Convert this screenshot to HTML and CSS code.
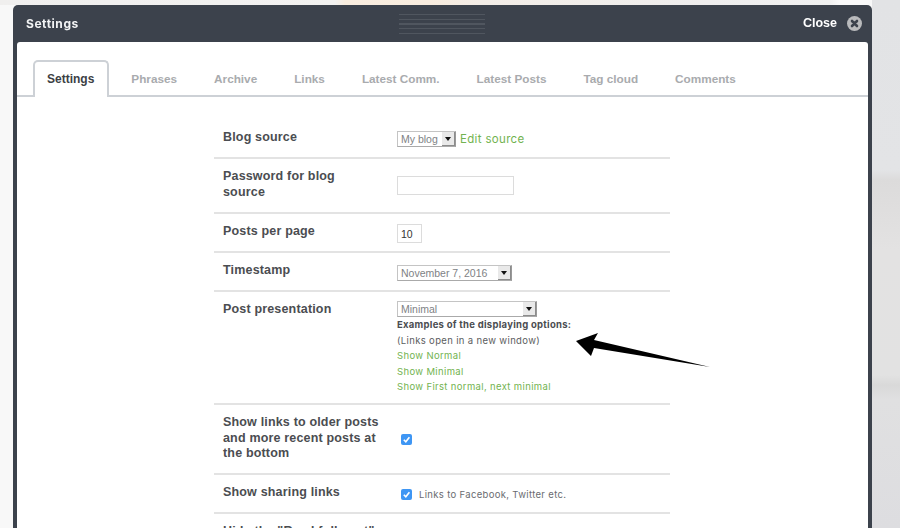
FILE: index.html
```html
<!DOCTYPE html>
<html lang="en">
<head>
<meta charset="utf-8">
<title>Settings</title>
<link rel="stylesheet" href="styles.css">
</head>
<body>
<div class="backdrop">
  <div class="modal">
    <header class="modal-head">
      <span class="modal-title">Settings</span>
      <span class="grip"></span>
      <span class="close">Close
        <svg class="close-icon" width="15" height="15" viewBox="0 0 15 15"><circle cx="7.5" cy="7.5" r="7.5" fill="#b9babc"/><path d="M5 5l5 5M10 5l-5 5" stroke="#3c424c" stroke-width="2.6" stroke-linecap="round"/></svg>
      </span>
    </header>
    <div class="modal-body">
      <nav class="tabs">
        <a class="tab active">Settings</a>
        <a class="tab">Phrases</a>
        <a class="tab">Archive</a>
        <a class="tab">Links</a>
        <a class="tab">Latest Comm.</a>
        <a class="tab">Latest Posts</a>
        <a class="tab">Tag cloud</a>
        <a class="tab">Comments</a>
      </nav>
      <div class="form">
        <div class="row r1">
          <div class="label">Blog source</div>
          <div class="value inline">
            <span class="select w59"><span class="sel-text">My blog</span><span class="sel-btn"></span></span>
            <a class="link big">Edit source</a>
          </div>
        </div>
        <div class="row r2">
          <div class="label">Password for blog source</div>
          <div class="value"><span class="input w117"></span></div>
        </div>
        <div class="row r3">
          <div class="label">Posts per page</div>
          <div class="value"><span class="input w25">10</span></div>
        </div>
        <div class="row r4">
          <div class="label">Timestamp</div>
          <div class="value"><span class="select w115"><span class="sel-text">November 7, 2016</span><span class="sel-btn"></span></span></div>
        </div>
        <div class="row r5">
          <div class="label">Post presentation</div>
          <div class="value">
            <span class="select w140"><span class="sel-text">Minimal</span><span class="sel-btn"></span></span>
            <div class="examples">
              <div class="ex-line ex-head">Examples of the displaying options:</div>
              <div class="ex-line ex-note">(Links open in a new window)</div>
              <div class="ex-line"><a class="link">Show Normal</a></div>
              <div class="ex-line"><a class="link">Show Minimal</a></div>
              <div class="ex-line"><a class="link">Show First normal, next minimal</a></div>
            </div>
          </div>
        </div>
        <div class="row r6">
          <div class="label">Show links to older posts and more recent posts at the bottom</div>
          <div class="value center"><span class="check"><svg width="11" height="11" viewBox="0 0 11 11"><path d="M2.8 5.8l2 2 3.6-4.6" fill="none" stroke="#fff" stroke-width="1.6"/></svg></span></div>
        </div>
        <div class="row r7">
          <div class="label">Show sharing links</div>
          <div class="value share"><span class="check"><svg width="11" height="11" viewBox="0 0 11 11"><path d="M2.8 5.8l2 2 3.6-4.6" fill="none" stroke="#fff" stroke-width="1.6"/></svg></span><span class="note">Links to Facebook, Twitter etc.</span></div>
        </div>
        <div class="row r8">
          <div class="label">Hide the "Read full post"</div>
        </div>
      </div>
    </div>
  </div>
  <svg class="arrow" width="140" height="40" viewBox="0 0 140 40"><polygon points="1,10 23,2 19,9 135,36 19,17 16,25" fill="#000"/></svg>
</div>
</body>
</html>
```

FILE: styles.css
```css
* { box-sizing: border-box; }
html, body { margin: 0; height: 100%; overflow: hidden; background: #f8f8f8; }
.backdrop {
  position: relative;
  width: 900px;
  height: 528px;
  overflow: hidden;
  padding: 5px 28px 0 13px;
  background:
    linear-gradient(90deg, #f0efee 0, #f3f2f1 335px, #f9eddf 345px, #f8ecdf 430px, #f3ede7 480px, #efeeee 710px, #f1f1f1 830px, #fafafa 840px, #fafafa 868px, transparent 870px) top left / 100% 5px no-repeat,
    linear-gradient(180deg, #e2e3e5 0, #e3e4e6 170px, #dcdbdb 180px, #e3e2e2 250px, #e2e2e2 375px, #d9d9d9 385px, #e0e0e1 400px, #dddde0 528px) right top / 28px 100% no-repeat,
    #f8f8f8;
}
.modal {
  background: #3c424c;
  border-radius: 5px 5px 0 0;
  height: 560px;
  padding: 0 4px;
  font-family: "Liberation Sans", Arial, sans-serif;
  filter: blur(0.4px);
}
.modal-head {
  height: 37px;
  display: flex;
  align-items: center;
  justify-content: space-between;
  padding: 0 6px 1px 9px;
  color: #fff;
  position: relative;
}
.modal-title {
  font-family: Inter, "Liberation Sans", sans-serif;
  font-size: 12px;
  font-weight: 700;
  letter-spacing: 0.55px;
  color: #f2f3f4;
}
.grip {
  position: absolute;
  left: 382px;
  top: 9px;
  width: 86px;
  height: 20px;
  background: repeating-linear-gradient(180deg, #50565f 0, #50565f 1px, transparent 1px, transparent 4.75px);
}
.close {
  display: flex;
  align-items: center;
  gap: 10px;
  font-size: 12.5px;
  font-weight: 700;
}
.close-icon { display: block; }
.modal-body {
  background: #fff;
  border-radius: 3px 3px 0 0;
  height: 520px;
  padding-top: 18px;
}
.tabs {
  display: flex;
  height: 37px;
  padding-left: 16px;
  border-bottom: 2px solid #cdd1d6;
  font-size: 11.75px;
  font-weight: 700;
}
.tab {
  display: block;
  height: 37px;
  padding: 12px 18.5px 0;
  color: #a9abae;
  white-space: nowrap;
}
.tab.active {
  color: #3c3f44;
  background: #fff;
  border: 2px solid #cdd1d6;
  border-bottom: 0;
  border-radius: 5px 5px 0 0;
  font-size: 12px;
  padding: 10px 13px 0 12px;
  margin-right: 3.5px;
}
.form {
  width: 456px;
  margin: 0 0 0 197px;
  padding-top: 23px;
  color: #4a4c50;
}
.row {
  display: grid;
  grid-template-columns: 183px 1fr;
  border-bottom: 2px solid #e3e3e3;
}
.label {
  padding: 10px 0 0 9px;
  font-size: 12.5px;
  line-height: 15.6px;
  font-weight: 700;
  letter-spacing: 0.17px;
  color: #4b4d51;
}
.r1 { height: 39px; }
.r2 { height: 55px; }
.r2 .label { padding-right: 20px; }
.r3, .r4, .r7 { height: 39px; }
.r5 { height: 113px; }
.r6 { height: 70px; }
.r8 { border-bottom: 0; height: 30px; }
.r1 .value { padding-top: 11px; }
.r2 .value { padding-top: 17px; }
.r3 .value { padding-top: 10px; }
.r4 .value { padding-top: 12px; }
.r5 .value { padding-top: 9px; }
.inline { display: flex; align-items: flex-start; gap: 4px; }
.select {
  display: flex;
  align-items: center;
  height: 16px;
  border: 1px solid #c4c4c4;
  border-bottom-color: #aaa;
  border-right-color: #999;
  background: #fff;
  font-size: 10.5px;
  color: #808285;
  padding-left: 3px;
}
.w59 { width: 59px; }
.w115 { width: 115px; }
.w140 { width: 140px; }
.sel-text { flex: 1; white-space: nowrap; }
.sel-btn {
  width: 13px;
  height: 14px;
  background: #e9e9e9;
  border-right: 1px solid #8c8c8c;
  border-bottom: 1px solid #8c8c8c;
  position: relative;
}
.sel-btn::after {
  content: "";
  position: absolute;
  left: 3px;
  top: 5px;
  border-left: 3px solid transparent;
  border-right: 3px solid transparent;
  border-top: 4px solid #111;
}
.link { color: #72b350; font-family: Inter, "Liberation Sans", sans-serif; }
.big { font-size: 11.5px; letter-spacing: 0.33px; line-height: 16px; }
.input {
  display: block;
  border: 1px solid #dcdcdc;
  background: #fff;
  font-size: 10.5px;
  color: #333;
  padding: 3px 3px 0;
}
.w117 { width: 117px; height: 19px; }
.w25 { width: 25px; height: 19px; }
.examples { font-family: Inter, "Liberation Sans", sans-serif; font-size: 9.5px; letter-spacing: 0.35px; }
.ex-line { height: 15.5px; line-height: 16px; }
.ex-head { font-weight: 700; color: #4b4d51; letter-spacing: 0.27px; }
.ex-note { color: #5b5d60; }
.center { display: flex; align-items: center; padding-left: 4px; }
.check {
  display: flex;
  align-items: center;
  justify-content: center;
  width: 11px;
  height: 11px;
  border-radius: 2px;
  background: #3e96f4;
  flex: none;
}
.share { display: flex; align-items: flex-start; padding: 14px 0 0 4px; gap: 7px; }
.note { font-family: Inter, "Liberation Sans", sans-serif; font-size: 9.5px; letter-spacing: 0.33px; color: #6a6c70; line-height: 11px; }
.arrow { position: absolute; left: 575px; top: 331px; }
```
